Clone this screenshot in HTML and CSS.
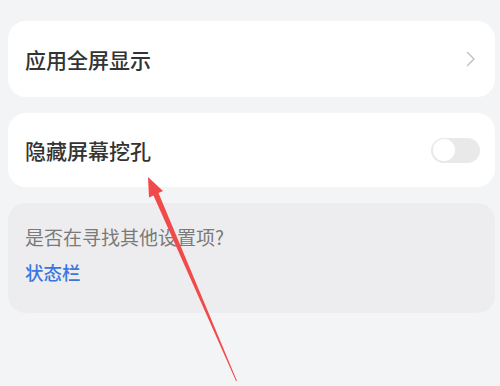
FILE: index.html
```html
<!DOCTYPE html>
<html lang="zh-CN">
<head>
  <meta charset="UTF-8">
  <meta name="viewport" content="width=device-width, initial-scale=1.0">
  <title>显示设置</title>
  <link rel="stylesheet" href="styles.css">
</head>
<body>

  <div class="settings">

    <div class="card row">
      <span class="row-title">应用全屏显示</span>
      <svg class="chevron" width="10" height="16" viewBox="0 0 10 16">
        <path d="M1.5 1.5 L8 8 L1.5 14.5" fill="none" stroke="#bdbdbd" stroke-width="1.3" stroke-linecap="round" stroke-linejoin="round"/>
      </svg>
    </div>

    <div class="card row short">
      <span class="row-title">隐藏屏幕挖孔</span>
      <div class="switch"><div class="knob"></div></div>
    </div>

    <div class="card hint">
      <div class="hint-text">是否在寻找其他设置项?</div>
      <a class="hint-link">状态栏</a>
    </div>

  </div>

  <!-- annotation arrow -->
  <svg class="arrow" width="500" height="386" viewBox="0 0 500 386">
    <polygon points="148,177 163,191 158.5,193 237,381 236,381 153.5,195.5 149,197.5" fill="#f24a4a"/>
  </svg>

</body>
</html>
```

FILE: styles.css
```css
body {
  font-family: "Noto Sans CJK SC", "Noto Sans", sans-serif;
  margin: 0;
  padding: 21px 5px 0 8px;
  background-color: #f3f4f6;
  width: 500px;
  height: 386px;
  box-sizing: border-box;
  overflow: hidden;
  position: relative;
}

.settings {
  display: flex;
  flex-direction: column;
  gap: 16px;
}

.card {
  background-color: #fff;
  border-radius: 18px;
}

.row {
  height: 76px;
  display: flex;
  align-items: center;
  justify-content: space-between;
  padding: 0 19px 0 17px;
  box-sizing: border-box;
}

.row.short {
  height: 74px;
  padding-right: 15px;
}

.row-title {
  font-size: 21px;
  font-weight: 500;
  color: #333;
  line-height: 1;
}

.switch {
  width: 49px;
  height: 25px;
  border-radius: 13px;
  background-color: #e9e9ea;
  padding: 1.5px;
  box-sizing: border-box;
}

.knob {
  width: 22px;
  height: 22px;
  border-radius: 50%;
  background-color: #fff;
}

.hint {
  background-color: #ededef;
  height: 110px;
  padding: 24px 17px 0;
  box-sizing: border-box;
}

.hint-text {
  font-size: 19px;
  color: #7a7a7a;
  line-height: 1;
}

.hint-link {
  display: block;
  margin-top: 17px;
  font-size: 18.5px;
  color: #3b76de;
  font-weight: 500;
  line-height: 1;
}

.arrow {
  position: absolute;
  left: 0;
  top: 0;
}
```
